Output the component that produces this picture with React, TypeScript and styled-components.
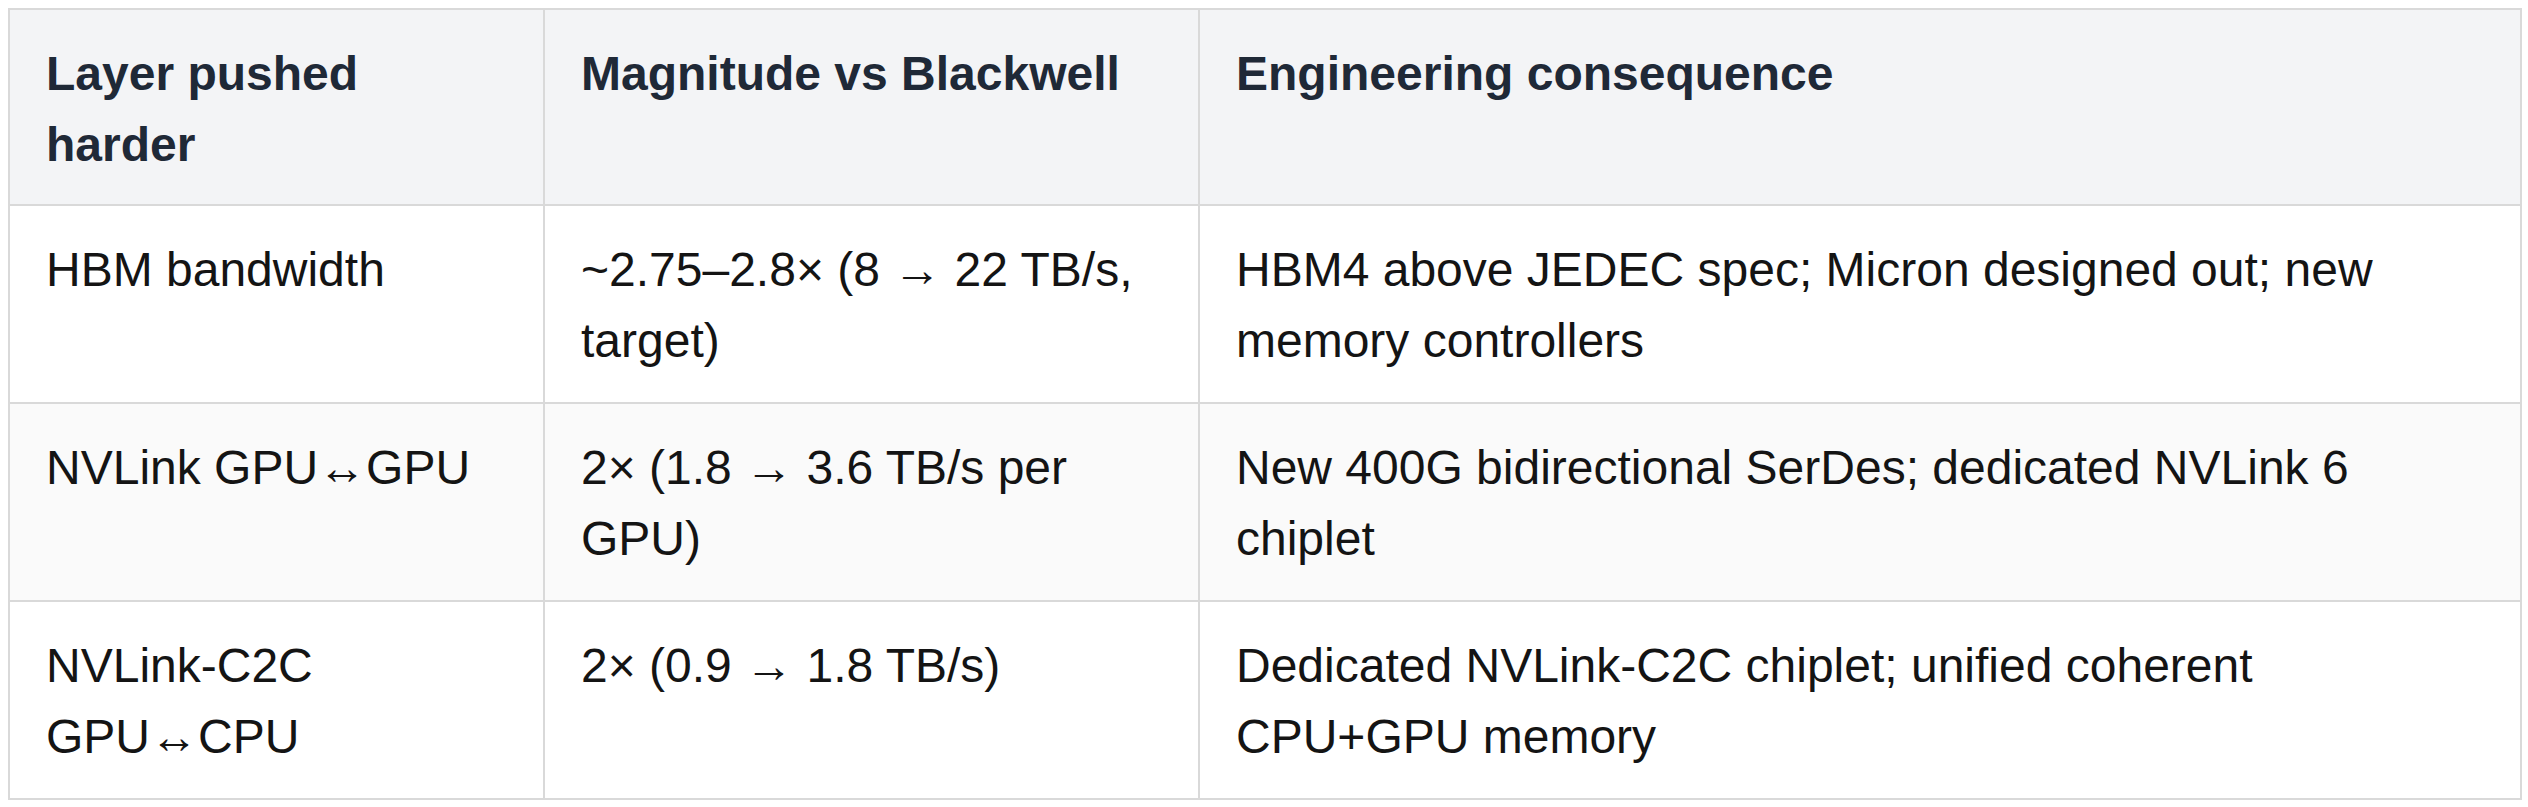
import React from "react";
import styled, { createGlobalStyle } from "styled-components";

const GlobalStyle = createGlobalStyle`
  html, body {
    margin: 0;
    padding: 0;
    background: #ffffff;
  }
  body {
    padding: 8px;
    font-family: "Liberation Sans", Arial, Helvetica, sans-serif;
  }
`;

const Table = styled.table`
  width: 2512px;
  border-collapse: collapse;
  border: 2px solid #d9d9d9;
  table-layout: fixed;
  font-family: "Liberation Sans", Arial, Helvetica, sans-serif;
  font-size: 48px;
  line-height: 71px;
`;

const Col = styled.col<{ $w: number }>`
  width: ${(p) => p.$w}px;
`;

const HeadRow = styled.tr`
  background: #f3f4f6;
`;

const BodyRow = styled.tr<{ $alt?: boolean }>`
  background: ${(p) => (p.$alt ? "#fafafa" : "#ffffff")};
`;

const Th = styled.th`
  border: 2px solid #d9d9d9;
  padding: 28px 36px 24px;
  text-align: left;
  vertical-align: top;
  font-weight: 700;
  color: #1f2937;
`;

const Td = styled.td`
  border: 2px solid #d9d9d9;
  padding: 28px 36px 26px;
  text-align: left;
  vertical-align: top;
  font-weight: 400;
  color: #141414;
`;

const headers = ["Layer pushed harder", "Magnitude vs Blackwell", "Engineering consequence"];

const rows: string[][] = [
  [
    "HBM bandwidth",
    "~2.75\u20132.8\u00d7 (8 \u2192 22 TB/s, target)",
    "HBM4 above JEDEC spec; Micron designed out; new memory controllers",
  ],
  [
    "NVLink GPU\u2194GPU",
    "2\u00d7 (1.8 \u2192 3.6 TB/s per GPU)",
    "New 400G bidirectional SerDes; dedicated NVLink 6 chiplet",
  ],
  [
    "NVLink-C2C GPU\u2194CPU",
    "2\u00d7 (0.9 \u2192 1.8 TB/s)",
    "Dedicated NVLink-C2C chiplet; unified coherent CPU+GPU memory",
  ],
];

export default function App() {
  return (
    <>
      <GlobalStyle />
      <Table>
        <colgroup>
          <Col $w={535} />
          <Col $w={655} />
          <Col $w={1322} />
        </colgroup>
        <thead>
          <HeadRow>
            {headers.map((h) => (
              <Th key={h}>{h}</Th>
            ))}
          </HeadRow>
        </thead>
        <tbody>
          {rows.map((r, i) => (
            <BodyRow key={i} $alt={i % 2 === 1}>
              {r.map((c, j) => (
                <Td key={j}>{c}</Td>
              ))}
            </BodyRow>
          ))}
        </tbody>
      </Table>
    </>
  );
}
